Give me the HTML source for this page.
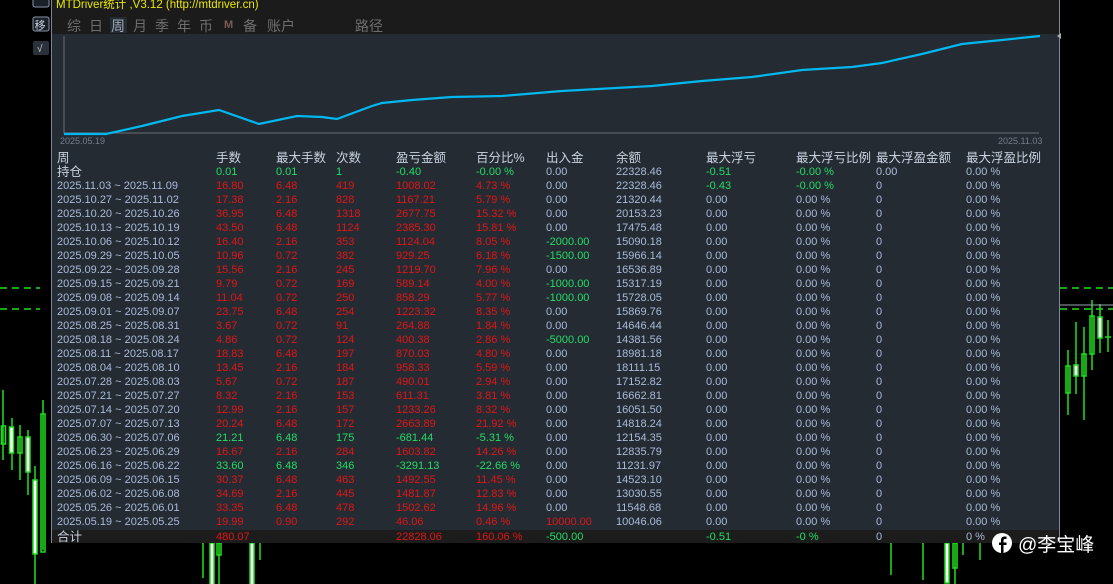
<!DOCTYPE html><html><head><meta charset="utf-8"><style>
body{margin:0;width:1113px;height:584px;background:#000;position:relative;overflow:hidden;font-family:"Liberation Sans","Noto Sans CJK SC",sans-serif}
.p{position:absolute;left:51px;top:0;width:1009px;height:543px;background:#252b33;border-left:1px solid #7d8698;border-right:1px solid #7d8698;border-bottom:1px solid #7d8698;box-sizing:border-box}
.tb{position:absolute;left:0;top:0;width:100%;height:34px;background:#1b1b1b}
.t{position:absolute;font-size:11px;white-space:nowrap;line-height:14px}
.h{font-size:12.5px;color:#c8d2e0}
.w{color:#a9bbd8}.r{color:#e01616}.g{color:#22dd66}
.tab{position:absolute;top:16px;font-size:14px;color:#6e6e6e}
</style></head><body>
<svg width="1113" height="584" style="position:absolute;left:0;top:0">
<g stroke="#1ee01e" fill="none" stroke-width="1.5">
<line x1="1060" y1="288" x2="1113" y2="288" stroke-dasharray="7,5"/>
<line x1="1060" y1="309" x2="1113" y2="309" stroke-dasharray="7,5"/>
<line x1="0" y1="288" x2="40" y2="288" stroke-dasharray="7,5"/>
<line x1="0" y1="309" x2="40" y2="309" stroke-dasharray="7,5"/>
<line x1="3" y1="390" x2="3" y2="460"/><rect x="1.5" y="426" width="4" height="18"/>
<line x1="12" y1="418" x2="12" y2="470"/><rect x="9.5" y="427" width="4" height="26" fill="#fff"/>
<line x1="20" y1="425" x2="20" y2="480"/><rect x="18" y="437" width="4" height="16"/>
<line x1="28" y1="430" x2="28" y2="495"/><rect x="26" y="437" width="4" height="35" fill="#fff"/>
<line x1="35" y1="466" x2="35" y2="584"/><rect x="33" y="480" width="4" height="74" fill="#fff"/>
<line x1="43" y1="400" x2="43" y2="550"/><rect x="41" y="414" width="4" height="138"/>
<line x1="1068" y1="350" x2="1068" y2="415"/><rect x="1066" y="366" width="4" height="27"/>
<line x1="1076" y1="322" x2="1076" y2="394"/><rect x="1074" y="365" width="4" height="11" fill="#fff"/>
<line x1="1084" y1="327" x2="1084" y2="420"/><rect x="1082" y="354" width="4" height="22"/>
<line x1="1092" y1="300" x2="1092" y2="370"/><rect x="1090" y="316" width="4" height="38"/>
<line x1="1100" y1="304" x2="1100" y2="353"/><rect x="1098" y="317" width="4" height="21" fill="#fff"/>
<line x1="1108" y1="320" x2="1108" y2="352"/><line x1="1105" y1="337" x2="1111" y2="337"/>
<line x1="203" y1="543" x2="203" y2="578"/><rect x="210" y="543" width="4" height="55" fill="#fff"/><line x1="219" y1="543" x2="219" y2="584"/><rect x="217" y="543" width="4" height="12"/>
<line x1="252" y1="543" x2="252" y2="584"/><rect x="250" y="543" width="4" height="45" fill="#fff"/><line x1="260" y1="543" x2="260" y2="560"/>
<line x1="891" y1="543" x2="891" y2="575"/><line x1="923" y1="543" x2="923" y2="580"/><rect x="945" y="543" width="4" height="40" fill="#fff"/><line x1="955" y1="543" x2="955" y2="584"/><rect x="953" y="543" width="4" height="25"/><line x1="963" y1="543" x2="963" y2="555"/><line x1="980" y1="543" x2="980" y2="560"/>
</g>
<line x1="1060" y1="305" x2="1113" y2="305" stroke="#9aa3b0"/>
<rect x="33" y="-4" width="16" height="11" rx="2" fill="#1b1f27" stroke="#8a96aa"/>
<rect x="33" y="17" width="16" height="14" rx="2" fill="#1b1f27" stroke="#8a96aa"/>
<text x="34.5" y="29" font-size="11" fill="#c8d2e0" font-family="Noto Sans CJK SC">移</text>
<rect x="33" y="41" width="16" height="14" rx="2" fill="#2a313b"/>
<text x="37" y="52" font-size="10" fill="#d0d0d0">√</text>
</svg>
<div class="p">
<div class="tb">
<div class="t" style="left:4px;top:-2px;font-size:11.5px;color:#e8e800">MTDriver统计 ,V3.12 (http://mtdriver.cn)</div>
<div style="position:absolute;left:58px;top:17px;width:17px;height:16px;background:#252b33"></div>
<span class="tab" style="left:15px">综</span><span class="tab" style="left:37px">日</span><span class="tab" style="left:59px;color:#a0a8b4">周</span><span class="tab" style="left:81px">月</span><span class="tab" style="left:103px">季</span><span class="tab" style="left:125px">年</span><span class="tab" style="left:147px">币</span><span class="tab" style="left:172px;font-size:11px;top:19px;font-weight:bold;color:#7a5a5a">M</span><span class="tab" style="left:191px">备</span><span class="tab" style="left:215px">账户</span><span class="tab" style="left:303px">路径</span>
</div>
<svg width="1009" height="145" style="position:absolute;left:0;top:0">
<polyline points="12,36 12,133 987,133" fill="none" stroke="#6a6f76" stroke-width="1"/>
<polyline points="12,134 54,134 90,126 130,116 167,110 207,124 245,116 270,117 285,119 320,106 330,103 360,100 400,97 450,96 510,91 600,86 650,81 700,77 750,70 800,67 830,63 870,54 910,44 950,40 988,36" fill="none" stroke="#00b8f0" stroke-width="2.2"/>
<text x="8" y="144" font-size="9" fill="#737c88" font-family="Liberation Sans">2025.05.19</text>
<text x="946" y="144" font-size="9" fill="#737c88" font-family="Liberation Sans">2025.11.03</text>
<path d="M1009,33 l-4,3 l4,3z" fill="#aaa"/>
</svg>
<div style="position:absolute;left:0;top:530px;width:100%;height:13px;background:#1c1c1c"></div>
<div id="rows"></div>
</div>
<svg width="120" height="30" style="position:absolute;left:990px;top:530px">
<path d="M12 3a10 10 0 1 0 0 20a10 10 0 0 0 0-20z" fill="#fff"/>
<path d="M13.5 23v-8h3v-2.5h-3v-2c0-1 .5-1.5 1.5-1.5h1.5v-2.5h-2c-2.5 0-3.5 1.5-3.5 3.5v2.5h-2v2.5h2v8z" fill="#000"/>
<text x="28" y="21" font-size="19" fill="#fff" font-family="Liberation Sans,Noto Sans CJK SC">@李宝峰</text>
</svg>
<script>
const cols=[5,164,224,284,344,424,494,564,654,744,824,914];
const H=["周","手数","最大手数","次数","盈亏金额","百分比%","出入金","余额","最大浮亏","最大浮亏比例","最大浮盈金额","最大浮盈比例"];
const data=[
["2025.11.03 ~ 2025.11.09","16.80","6.48","419","1008.02","4.73 %","0.00","22328.46"],
["2025.10.27 ~ 2025.11.02","17.38","2.16","828","1167.21","5.79 %","0.00","21320.44"],
["2025.10.20 ~ 2025.10.26","36.95","6.48","1318","2677.75","15.32 %","0.00","20153.23"],
["2025.10.13 ~ 2025.10.19","43.50","6.48","1124","2385.30","15.81 %","0.00","17475.48"],
["2025.10.06 ~ 2025.10.12","16.40","2.16","353","1124.04","8.05 %","-2000.00","15090.18"],
["2025.09.29 ~ 2025.10.05","10.96","0.72","382","929.25","6.18 %","-1500.00","15966.14"],
["2025.09.22 ~ 2025.09.28","15.56","2.16","245","1219.70","7.96 %","0.00","16536.89"],
["2025.09.15 ~ 2025.09.21","9.79","0.72","169","589.14","4.00 %","-1000.00","15317.19"],
["2025.09.08 ~ 2025.09.14","11.04","0.72","250","858.29","5.77 %","-1000.00","15728.05"],
["2025.09.01 ~ 2025.09.07","23.75","6.48","254","1223.32","8.35 %","0.00","15869.76"],
["2025.08.25 ~ 2025.08.31","3.67","0.72","91","264.88","1.84 %","0.00","14646.44"],
["2025.08.18 ~ 2025.08.24","4.86","0.72","124","400.38","2.86 %","-5000.00","14381.56"],
["2025.08.11 ~ 2025.08.17","18.83","6.48","197","870.03","4.80 %","0.00","18981.18"],
["2025.08.04 ~ 2025.08.10","13.45","2.16","184","958.33","5.59 %","0.00","18111.15"],
["2025.07.28 ~ 2025.08.03","5.67","0.72","187","490.01","2.94 %","0.00","17152.82"],
["2025.07.21 ~ 2025.07.27","8.32","2.16","153","611.31","3.81 %","0.00","16662.81"],
["2025.07.14 ~ 2025.07.20","12.99","2.16","157","1233.26","8.32 %","0.00","16051.50"],
["2025.07.07 ~ 2025.07.13","20.24","6.48","172","2663.89","21.92 %","0.00","14818.24"],
["2025.06.30 ~ 2025.07.06","21.21","6.48","175","-681.44","-5.31 %","0.00","12154.35"],
["2025.06.23 ~ 2025.06.29","16.67","2.16","284","1603.82","14.26 %","0.00","12835.79"],
["2025.06.16 ~ 2025.06.22","33.60","6.48","346","-3291.13","-22.66 %","0.00","11231.97"],
["2025.06.09 ~ 2025.06.15","30.37","6.48","463","1492.55","11.45 %","0.00","14523.10"],
["2025.06.02 ~ 2025.06.08","34.69","2.16","445","1481.87","12.83 %","0.00","13030.55"],
["2025.05.26 ~ 2025.06.01","33.35","6.48","478","1502.62","14.96 %","0.00","11548.68"],
["2025.05.19 ~ 2025.05.25","19.99","0.90","292","46.06","0.46 %","10000.00","10046.06"]];
let h="";
function c(x,y,t,cl,ex){h+=`<div class="t ${cl}" style="left:${x}px;top:${y}px;${ex||''}">${t}</div>`}
H.forEach((t,i)=>c(cols[i],151,t,"h"));
c(cols[0],165,"持仓","h");
["0.01","0.01","1","-0.40","-0.00 %","0.00","22328.46","-0.51","-0.00 %","0.00","0.00 %"].forEach((t,i)=>c(cols[i+1],165,t,i<5||i==7||i==8?"g":"w"));
data.forEach((r,k)=>{const y=179+k*14;const neg=r[4][0]=="-";
 c(cols[0],y,r[0],"w");
 for(let i=1;i<6;i++)c(cols[i],y,r[i],neg?"g":"r");
 c(cols[6],y,r[6],r[6][0]=="-"?"g":(r[6]=="0.00"?"w":"r"));
 c(cols[7],y,r[7],"w");
 if(k==0){c(cols[8],y,"-0.43","g");c(cols[9],y,"-0.00 %","g");}else{c(cols[8],y,"0.00","w");c(cols[9],y,"0.00 %","w");}
 c(cols[10],y,"0","w");c(cols[11],y,"0.00 %","w");});
const y=530;
c(cols[0],y,"合计","h");c(cols[1],y,"480.07","r");c(cols[4],y,"22828.06","r");c(cols[5],y,"160.06 %","r");c(cols[6],y,"-500.00","g");c(cols[8],y,"-0.51","g");c(cols[9],y,"-0 %","g");c(cols[10],y,"0","w");c(cols[11],y,"0 %","w");
document.getElementById("rows").innerHTML=h;
</script>
</body></html>
